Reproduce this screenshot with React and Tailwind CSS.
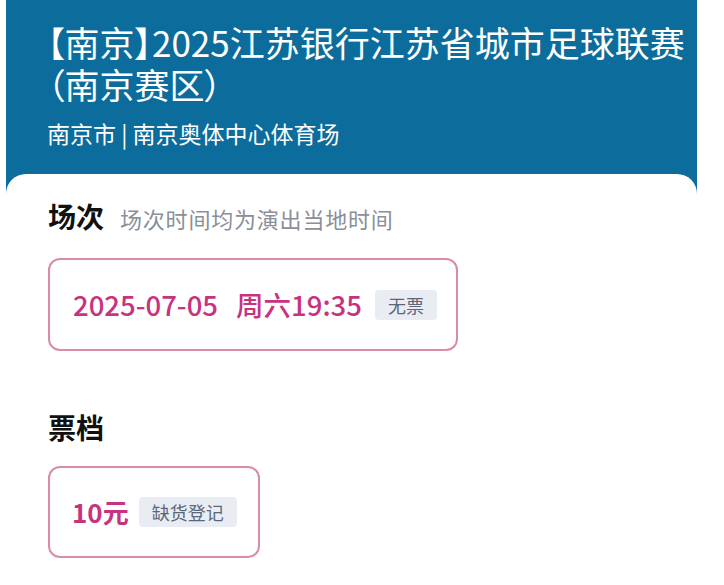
import React from 'react';

const font = { fontFamily: '"Noto Sans CJK SC", "Noto Sans", sans-serif' };

function Tag({ children }) {
  return (
    <span className="inline-flex items-center justify-center h-[30px] px-[13px] rounded-[4px] bg-[#e9edf3] text-[#5d6679] text-[18px] leading-none">
      {children}
    </span>
  );
}

export default function App() {
  return (
    <div className="w-[724px] h-[585px] bg-white overflow-hidden" style={font}>
      <div className="ml-[6px] w-[691px] bg-[#0c6d9c]">
        {/* header */}
        <div className="pl-[41px] pr-[4px] pt-[21px] pb-[26px] text-white">
          <h1 className="text-[35px] leading-[42px] font-normal [font-feature-settings:'palt']">
            【南京】2025江苏银行江苏省城市足球联赛（南京赛区）
          </h1>
          <p className="mt-[13px] text-[23px] leading-[30px]">南京市 | 南京奥体中心体育场</p>
        </div>

        {/* body */}
        <div className="bg-white rounded-t-[20px] pl-[42px] pt-[22px] h-[420px]">
          <div className="flex items-baseline gap-[16px]">
            <h2 className="text-[28px] leading-[40px] font-bold text-[#111]">场次</h2>
            <span className="text-[22px] text-[#8a8f98] tracking-[0.8px]">场次时间均为演出当地时间</span>
          </div>

          <div className="mt-[22px] w-[410px] h-[93px] border-2 border-[#d98ca9] rounded-[12px] flex items-center pl-[23px]">
            <span className="text-[27.5px] font-medium text-[#c8337f] leading-none">2025-07-05</span>
            <span className="ml-[18px] text-[27.5px] font-medium text-[#c8337f] leading-none">周六19:35</span>
            <span className="ml-[13px]"><Tag>无票</Tag></span>
          </div>

          <h2 className="mt-[56px] text-[28px] leading-[40px] font-bold text-[#111]">票档</h2>

          <div className="mt-[19px] w-[212px] h-[92px] border-2 border-[#d98ca9] rounded-[12px] flex items-center pl-[22px]">
            <span className="text-[26px] font-semibold text-[#c8337f] leading-none">10元</span>
            <span className="ml-[10px]"><Tag>缺货登记</Tag></span>
          </div>
        </div>
      </div>
    </div>
  );
}
